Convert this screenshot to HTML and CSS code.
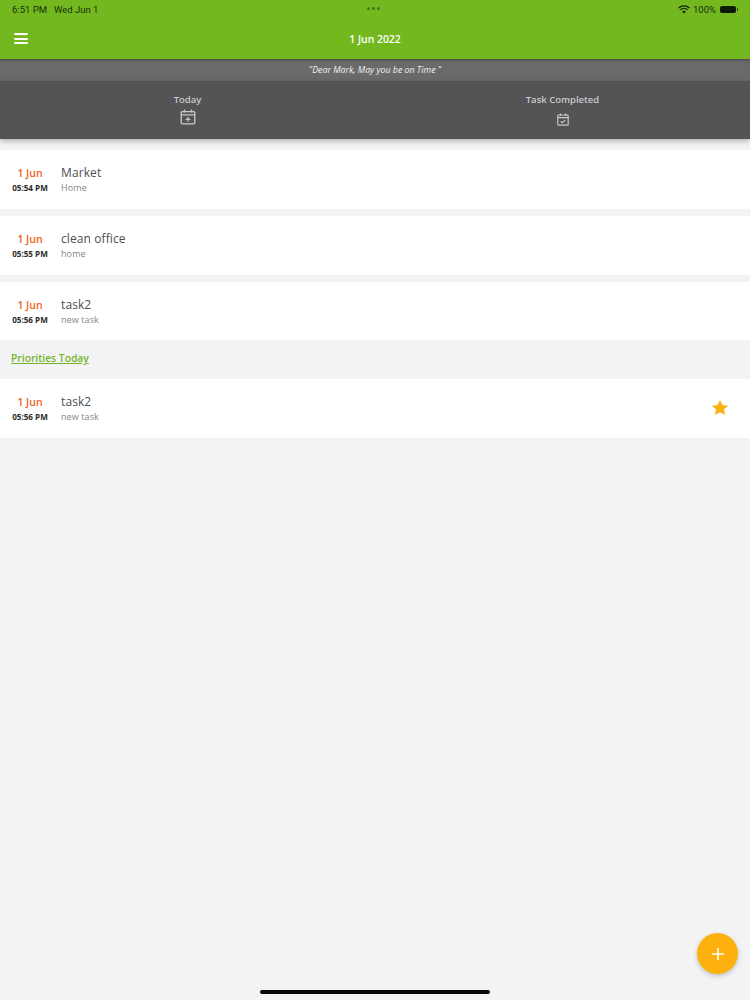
FILE: index.html
```html
<!DOCTYPE html>
<html lang="en">
<head>
<meta charset="utf-8">
<title>Tasks</title>
<link rel="stylesheet" href="styles.css">
</head>
<body>
<div class="app">
  <header class="appbar">
    <div class="status">
      <div class="status-left"><span>6:51 PM</span><span>Wed Jun 1</span></div>
      <div class="dots"><i></i><i></i><i></i></div>
      <div class="status-right">
        <svg class="wifi" width="12" height="9" viewBox="0 0 12 9"><path d="M.6 3A7.8 7.8 0 0 1 11.4 3" fill="none" stroke="#10240a" stroke-width="1.3"/><path d="M2.4 4.9a5.2 5.2 0 0 1 7.2 0" fill="none" stroke="#10240a" stroke-width="1.3"/><path d="M4.2 6.7a2.6 2.6 0 0 1 3.6 0L6 8.6z" fill="#10240a"/></svg>
        <span>100%</span>
        <span class="battery"></span><span class="battery-tip"></span>
      </div>
    </div>
    <div class="titlebar">
      <div class="menu"><i></i><i></i><i></i></div>
      <div class="title">1 Jun 2022</div>
    </div>
  </header>
  <div class="quote">"Dear Mark, May you be on Time "</div>
  <nav class="tabs">
    <div class="tab">
      <span class="tab-label">Today</span>
      <svg class="tab-icon" width="16" height="16" viewBox="0 0 16 16" fill="none" stroke="#c9c9ca" stroke-width="1.3"><rect x="1.2" y="2.6" width="13.6" height="12.2" rx="1"/><path d="M1.2 5.8h13.6M4.5 .6v3M11.5 .6v3M8 8v4.6M5.7 10.3h4.6"/></svg>
    </div>
    <div class="tab">
      <span class="tab-label">Task Completed</span>
      <svg class="tab-icon tab-icon-small" width="12" height="13" viewBox="0 0 12 13" fill="none" stroke="#c9c9ca" stroke-width="1.2"><rect x=".8" y="2" width="10.4" height="10.2" rx="1"/><path d="M.8 4.6h10.400M3.4 .4v2.6M8.6 .4v2.6M3.8 8.2l1.6 1.5 2.9-2.6"/></svg>
    </div>
  </nav>
  <main class="content">
    <section class="task">
      <div class="when"><span class="date">1 Jun</span><span class="time">05:54 PM</span></div>
      <div class="what"><span class="name">Market</span><span class="note">Home</span></div>
    </section>
    <section class="task">
      <div class="when"><span class="date">1 Jun</span><span class="time">05:55 PM</span></div>
      <div class="what"><span class="name">clean office</span><span class="note">home</span></div>
    </section>
    <section class="task">
      <div class="when"><span class="date">1 Jun</span><span class="time">05:56 PM</span></div>
      <div class="what"><span class="name">task2</span><span class="note">new task</span></div>
    </section>
    <h2 class="section-title">Priorities Today</h2>
    <section class="task task-flush">
      <div class="when"><span class="date">1 Jun</span><span class="time">05:56 PM</span></div>
      <div class="what"><span class="name">task2</span><span class="note">new task</span></div>
      <svg class="star" width="16" height="15" viewBox="0 0 16 15"><path d="M8 0l2.4 5 5.6.7-4.1 3.8 1.1 5.5L8 12.3 3 15l1.100-5.500L0 5.700l5.600-.7z" fill="#fdb10e"/></svg>
    </section>
  </main>
  <button class="fab" aria-label="Add"><svg width="12" height="12" viewBox="0 0 12 12"><path d="M6 0v12M0 6h12" stroke="#fff" stroke-width="1.6"/></svg></button>
  <div class="home-bar"></div>
</div>
</body>
</html>
```
FILE: styles.css
```css
* { box-sizing: border-box; }
html, body { margin: 0; padding: 0; }
body { font-family: "Open Sans", "Noto Sans", sans-serif; background: #f3f3f5; }
.app { position: relative; width: 750px; height: 1000px; overflow: hidden; display: flex; flex-direction: column; }

.appbar { height: 59px; background: #74b81f; flex: none; }
.status { height: 18px; padding: 1px 12px 0; display: flex; align-items: center; justify-content: space-between; position: relative; font-family: Roboto, "Liberation Sans", sans-serif; font-size: 9.5px; color: #15300c; }
.status-left { display: flex; gap: 7px; }
.status-right { display: flex; align-items: center; gap: 3px; }
.dots { position: absolute; left: 367px; top: 7px; display: flex; gap: 2px; }
.dots i { width: 3px; height: 3px; border-radius: 50%; background: #3f7a1a; }
.battery { width: 16px; height: 7px; background: #0e1a08; border-radius: 2px; margin-left: 1px; }
.battery-tip { width: 1px; height: 3px; background: #2c4a14; margin-left: -2px; }
.titlebar { height: 41px; position: relative; display: flex; align-items: center; justify-content: center; }
.menu { position: absolute; left: 14px; top: 15px; width: 14px; display: flex; flex-direction: column; gap: 2.5px; }
.menu i { height: 2px; background: #fff; border-radius: 1px; }
.title { font-size: 10.4px; font-weight: 600; color: #fff; }

.quote { height: 22px; flex: none; background: #6a6a6a; color: #f2f2f2; font-size: 8.8px; font-style: italic; font-weight: 400; display: flex; align-items: center; justify-content: center; box-shadow: inset 0 3px 3px -2px rgba(0,0,0,.35); }
.tabs { height: 58px; flex: none; background: #545355; display: grid; grid-template-columns: 1fr 1fr; box-shadow: 0 2px 5px rgba(0,0,0,.28); position: relative; }
.tab { display: flex; flex-direction: column; align-items: center; padding-top: 12px; }
.tab-label { font-size: 9.5px; font-weight: 600; color: #c9c9ca; line-height: 14px; }
.tab-icon { margin-top: 2px; }
.tab-icon-small { margin-top: 6px; }

.content { flex: 1; padding-top: 11px; }
.task { height: 59px; background: #fff; display: flex; align-items: center; margin-bottom: 7px; position: relative; }
.task:nth-of-type(3) { margin-bottom: 0; height: 58px; }
.task-flush { margin-bottom: 0; height: 59px; }
.when { width: 60px; display: flex; flex-direction: column; align-items: center; flex: none; margin-top: 1px; }
.date { font-size: 10.5px; font-weight: 600; color: #f1621a; line-height: 15px; padding-top: 1px; }
.time { font-size: 8.1px; font-weight: 700; color: #2b2b2b; line-height: 14px; }
.what { margin-left: 1px; display: flex; flex-direction: column; }
.name { font-size: 12px; color: #4e4e52; line-height: 17px; letter-spacing: .1px; }
.note { font-size: 9px; color: #85858a; line-height: 14px; letter-spacing: .1px; }
.star { position: absolute; right: 22px; top: 21px; }
.section-title { margin: 0; height: 39px; padding: 10px 0 0 11px; font-size: 10.3px; font-weight: 600; line-height: 16px; color: #72b52a; text-decoration: underline; }

.fab { position: absolute; left: 697px; top: 933px; width: 41px; height: 41px; border: 0; padding: 0; border-radius: 50%; background: #fdb10e; display: flex; align-items: center; justify-content: center; box-shadow: 0 2px 5px rgba(0,0,0,.2); }
.home-bar { position: absolute; left: 260px; top: 990px; width: 230px; height: 4px; border-radius: 2px; background: #050505; }
```
